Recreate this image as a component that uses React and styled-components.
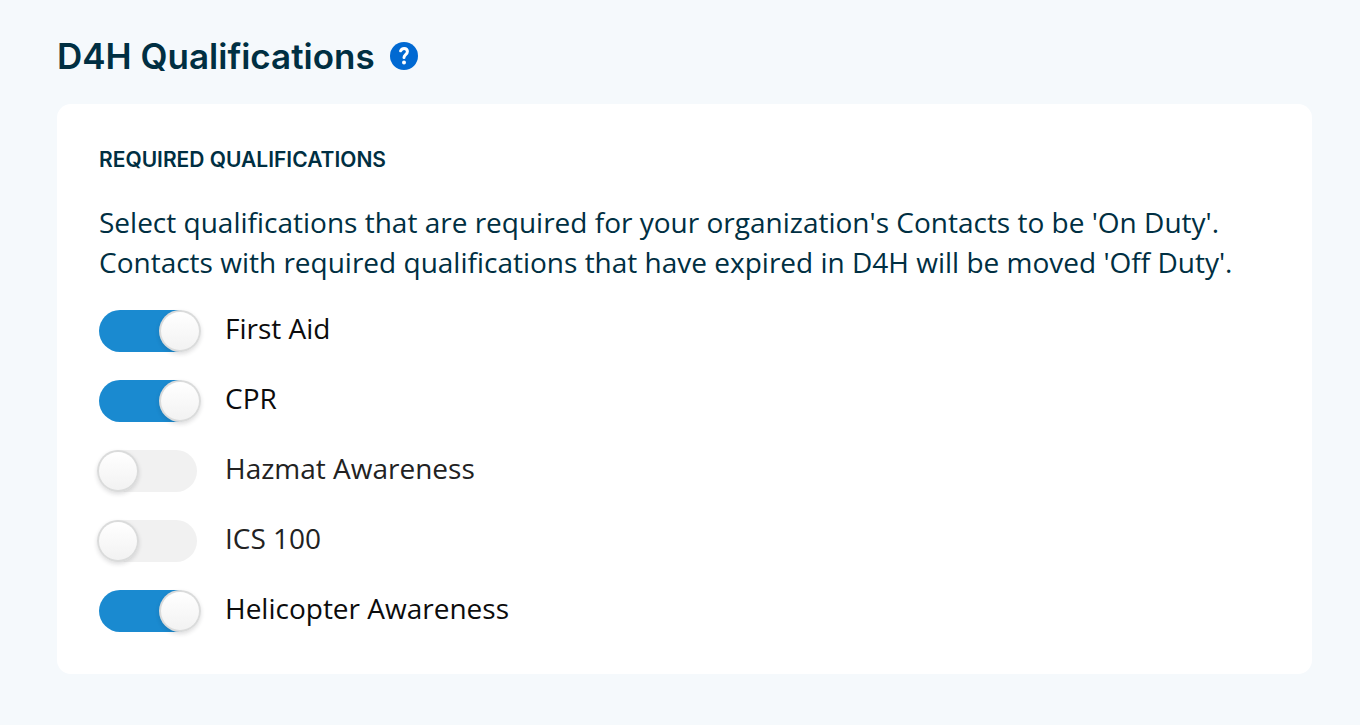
import React from "react";
import styled, { createGlobalStyle } from "styled-components";

const GlobalStyle = createGlobalStyle`
  *, *::before, *::after { box-sizing: border-box; }
  body {
    margin: 0;
    background: #f5f9fc;
    color: #002f42;
    font-family: "Open Sans", sans-serif;
    font-size: 28px;
    line-height: 40px;
  }
`;

const Page = styled.main`
  padding: 32px 48px 48px 57px;
`;

const Header = styled.header`
  display: flex;
  align-items: center;
  gap: 15px;
  height: 48px;
  margin-bottom: 24px;
`;

const Title = styled.h1`
  margin: 0;
  font-family: Inter, sans-serif;
  font-size: 35px;
  font-weight: 600;
  line-height: 48px;
`;

const HelpButton = styled.button`
  width: 28px;
  height: 28px;
  padding: 0;
  border: 0;
  border-radius: 50%;
  background: #0069d2;
  color: #fff;
  cursor: pointer;

  svg { display: block; }
`;

const Card = styled.section`
  padding: 40px 42px 42px;
  border-radius: 14px;
  background: #fff;
`;

const SectionTitle = styled.h2`
  margin: 0 0 26px;
  font-family: Inter, sans-serif;
  font-size: 21px;
  font-weight: 600;
  line-height: 32px;
  text-transform: uppercase;
`;

const Description = styled.p`
  margin: 0 0 28px;
`;

const List = styled.ul`
  display: flex;
  flex-direction: column;
  gap: 28px;
  margin: 0;
  padding: 0;
  list-style: none;
`;

const Option = styled.label`
  display: flex;
  align-items: center;
  gap: 28px;
  width: fit-content;
  height: 42px;
  color: #222;
  cursor: pointer;

  &:has(input:checked) { color: #0c0c0c; }
`;

const Switch = styled.input`
  appearance: none;
  position: relative;
  flex: none;
  width: 98px;
  height: 42px;
  margin: 0;
  border-radius: 21px;
  background: #f1f1f1;
  cursor: pointer;

  &::before {
    content: "";
    position: absolute;
    top: 0;
    left: -2px;
    width: 42px;
    height: 42px;
    border: 2px solid transparent;
    border-radius: 50%;
    background:
      linear-gradient(#fff, #f2f2f2) padding-box,
      linear-gradient(#dadbdb, #dadbdb) border-box;
    box-shadow: 0 2px 4px rgba(34, 36, 38, 0.15);
  }

  &:checked { background: #1a8ad0; }
  &:checked::before { left: 60px; }
`;

const OptionText = styled.span`
  padding-bottom: 6px;
`;

const qualifications = [
  { name: "First Aid", required: true },
  { name: "CPR", required: true },
  { name: "Hazmat Awareness", required: false },
  { name: "ICS 100", required: false },
  { name: "Helicopter Awareness", required: true },
];

function QuestionIcon() {
  return (
    <svg width="28" height="28" viewBox="0 0 28 28" fill="none" aria-hidden="true">
      <path
        d="M10.6 8.8C11.4 7.2 12.5 6.4 14.1 6.4C16.1 6.4 17.4 7.8 17.4 9.6C17.4 12.6 14 12.7 14 15.4"
        stroke="currentColor"
        strokeWidth="3"
        strokeLinecap="round"
      />
      <circle cx="14" cy="20.6" r="2" fill="currentColor" />
    </svg>
  );
}

export default function App() {
  return (
    <>
      <GlobalStyle />
      <Page>
        <Header>
          <Title>D4H Qualifications</Title>
          <HelpButton type="button" aria-label="Help">
            <QuestionIcon />
          </HelpButton>
        </Header>
        <Card>
          <SectionTitle>Required Qualifications</SectionTitle>
          <Description>
            Select qualifications that are required for your organization's Contacts to be 'On Duty'.
            Contacts with required qualifications that have expired in D4H will be moved 'Off Duty'.
          </Description>
          <List>
            {qualifications.map((q) => (
              <li key={q.name}>
                <Option>
                  <Switch type="checkbox" defaultChecked={q.required} />
                  <OptionText>{q.name}</OptionText>
                </Option>
              </li>
            ))}
          </List>
        </Card>
      </Page>
    </>
  );
}
